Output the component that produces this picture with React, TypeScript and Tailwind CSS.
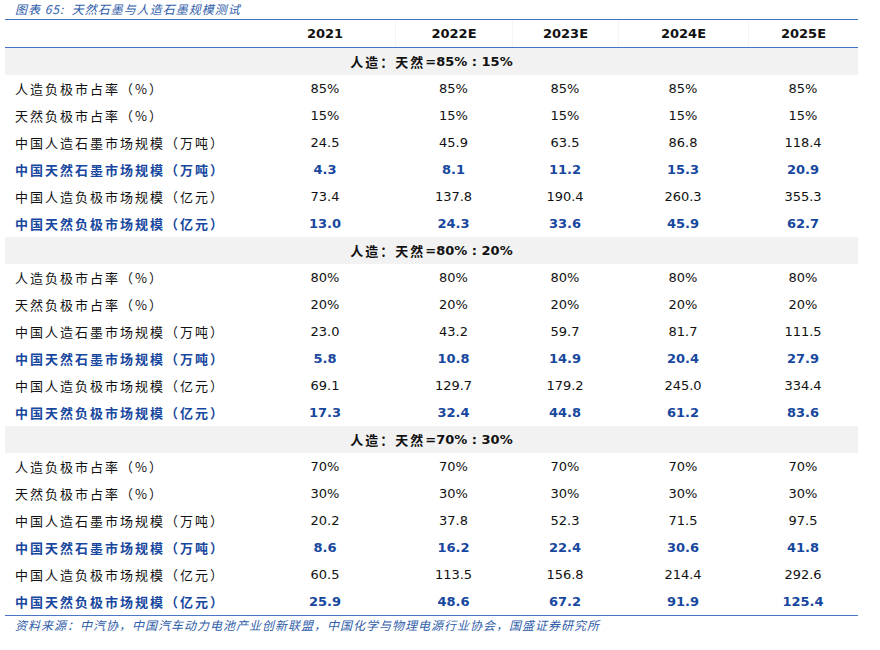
const cjk = "font-['Noto_Sans_CJK_SC',sans-serif]"
const num = "font-['DejaVu_Sans','Noto_Sans_CJK_SC',sans-serif]"

type Row = { label: string; values: string[]; bold?: boolean }
type Section = { ratio: string; rows: Row[] }

const years = ['2021', '2022E', '2023E', '2024E', '2025E']

const sections: Section[] = [
  {
    ratio: '=85% : 15%',
    rows: [
      { label: '人造负极市占率（%）', values: ['85%', '85%', '85%', '85%', '85%'] },
      { label: '天然负极市占率（%）', values: ['15%', '15%', '15%', '15%', '15%'] },
      { label: '中国人造石墨市场规模（万吨）', values: ['24.5', '45.9', '63.5', '86.8', '118.4'] },
      { label: '中国天然石墨市场规模（万吨）', values: ['4.3', '8.1', '11.2', '15.3', '20.9'], bold: true },
      { label: '中国人造负极市场规模（亿元）', values: ['73.4', '137.8', '190.4', '260.3', '355.3'] },
      { label: '中国天然负极市场规模（亿元）', values: ['13.0', '24.3', '33.6', '45.9', '62.7'], bold: true },
    ],
  },
  {
    ratio: '=80% : 20%',
    rows: [
      { label: '人造负极市占率（%）', values: ['80%', '80%', '80%', '80%', '80%'] },
      { label: '天然负极市占率（%）', values: ['20%', '20%', '20%', '20%', '20%'] },
      { label: '中国人造石墨市场规模（万吨）', values: ['23.0', '43.2', '59.7', '81.7', '111.5'] },
      { label: '中国天然石墨市场规模（万吨）', values: ['5.8', '10.8', '14.9', '20.4', '27.9'], bold: true },
      { label: '中国人造负极市场规模（亿元）', values: ['69.1', '129.7', '179.2', '245.0', '334.4'] },
      { label: '中国天然负极市场规模（亿元）', values: ['17.3', '32.4', '44.8', '61.2', '83.6'], bold: true },
    ],
  },
  {
    ratio: '=70% : 30%',
    rows: [
      { label: '人造负极市占率（%）', values: ['70%', '70%', '70%', '70%', '70%'] },
      { label: '天然负极市占率（%）', values: ['30%', '30%', '30%', '30%', '30%'] },
      { label: '中国人造石墨市场规模（万吨）', values: ['20.2', '37.8', '52.3', '71.5', '97.5'] },
      { label: '中国天然石墨市场规模（万吨）', values: ['8.6', '16.2', '22.4', '30.6', '41.8'], bold: true },
      { label: '中国人造负极市场规模（亿元）', values: ['60.5', '113.5', '156.8', '214.4', '292.6'] },
      { label: '中国天然负极市场规模（亿元）', values: ['25.9', '48.6', '67.2', '91.9', '125.4'], bold: true },
    ],
  },
]

const gridCols = 'grid grid-cols-[250px_140px_117px_106px_130px_110px]'

function DataRow({ row }: { row: Row }) {
  const color = row.bold ? 'text-[#17479e] font-bold' : 'text-[#111]'
  return (
    <div className={`${gridCols} h-[27px] items-center ${color}`}>
      <div className={`${cjk} pl-[10px] text-[13px] tracking-[2px] whitespace-nowrap`}>{row.label}</div>
      {row.values.map((v, i) => (
        <div key={i} className={`${num} text-center text-[13px]`}>
          {v}
        </div>
      ))}
    </div>
  )
}

export default function App() {
  return (
    <div className="w-[880px] h-[650px] bg-white overflow-hidden">
      <div className={`${cjk} h-[19px] pl-[15px] text-[12px] leading-[17px] italic text-[#2f5da9] tracking-[1px]`}>
        图表 65:&nbsp; 天然石墨与人造石墨规模测试
      </div>

      <div className="ml-[5px] w-[853px]">
        <div className={`${gridCols} h-[29px] items-center border-y border-[#4472c4] font-bold text-[#111]`}>
          <div />
          {years.map((y, i) => (
            <div key={y} className={`${num} h-full flex items-center justify-center text-[13px] ${i > 0 ? 'border-l border-[#f4f4f4]' : ''}`}>
              {y}
            </div>
          ))}
        </div>

        {sections.map((s) => (
          <div key={s.ratio}>
            <div className="h-[27px] bg-[#f2f2f2] flex items-center justify-center font-bold text-[#111]">
              <span className={`${cjk} text-[13px] tracking-[2px]`}>人造：天然</span>
              <span className={`${num} text-[13px]`}>{s.ratio}</span>
            </div>
            {s.rows.map((r) => (
              <DataRow key={r.label} row={r} />
            ))}
          </div>
        ))}

        <div className="border-b-[1.5px] border-[#4a78c4]" />
      </div>

      <div className={`${cjk} pl-[15px] pt-[1px] text-[12px] leading-[16px] italic text-[#2f5da9] tracking-[1px]`}>
        资料来源：中汽协，中国汽车动力电池产业创新联盟，中国化学与物理电源行业协会，国盛证券研究所
      </div>
    </div>
  )
}
